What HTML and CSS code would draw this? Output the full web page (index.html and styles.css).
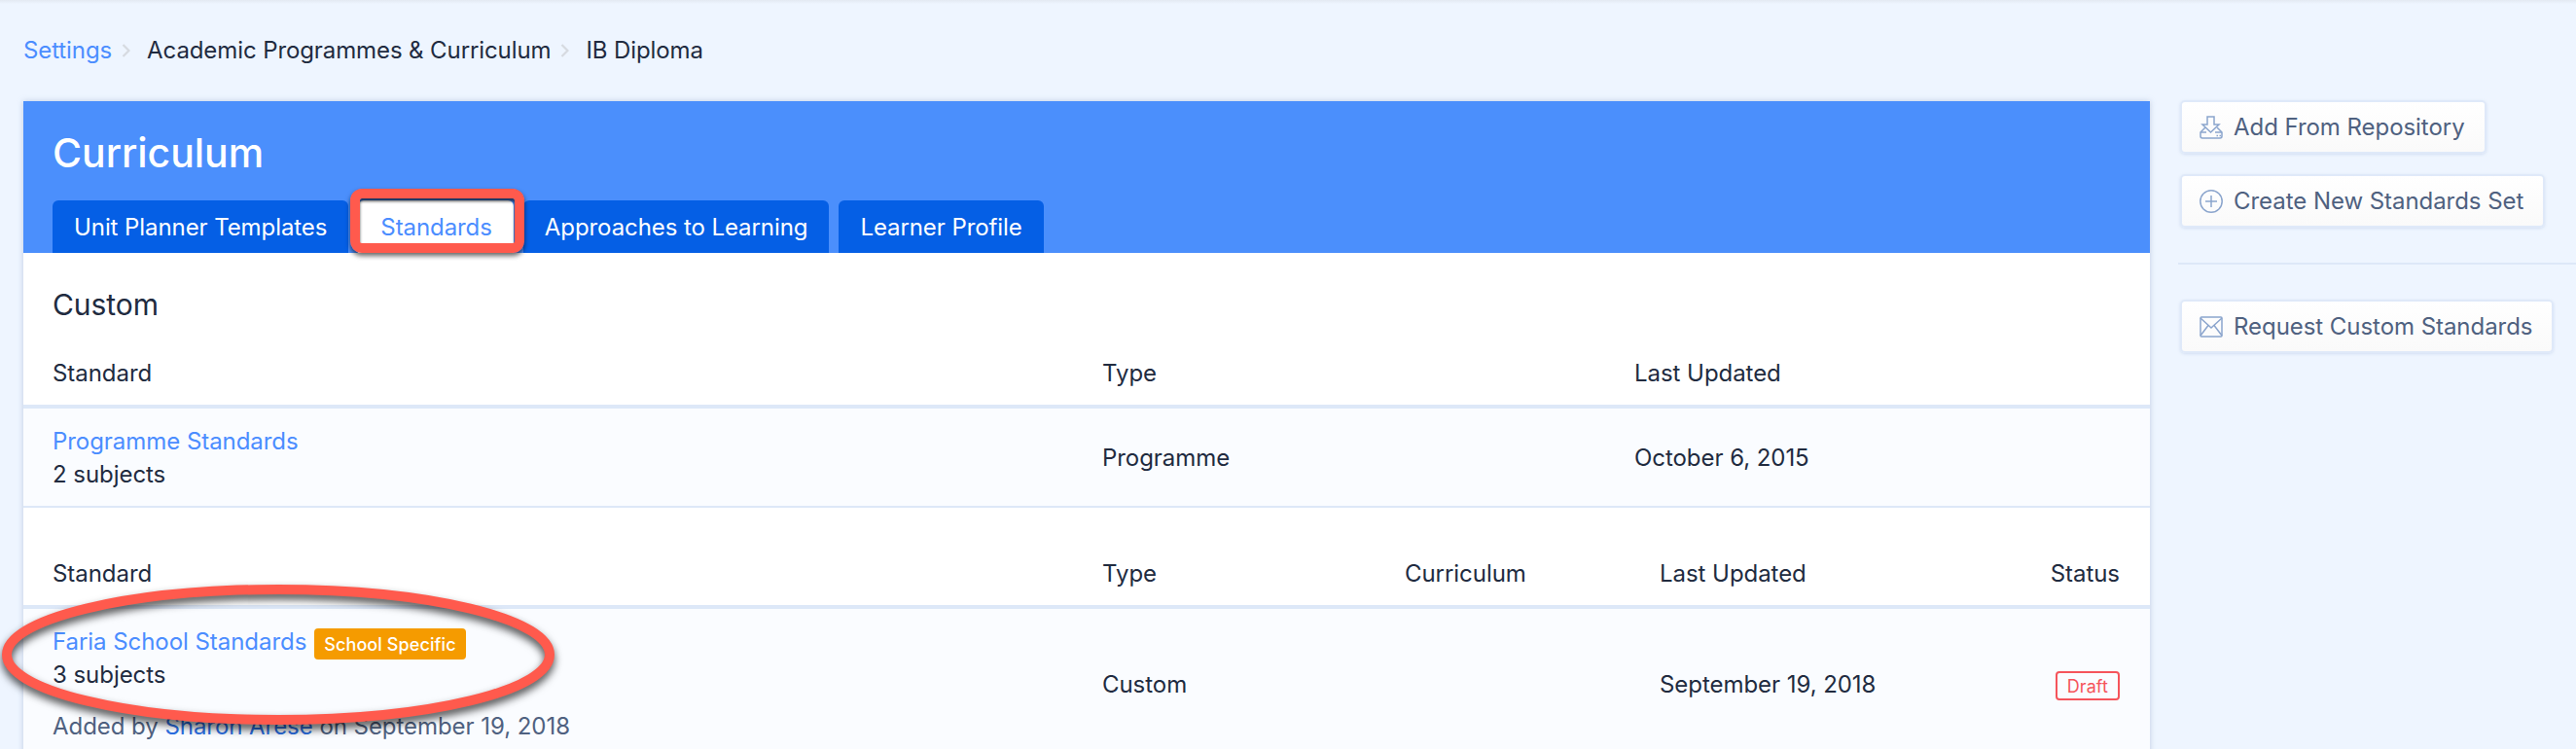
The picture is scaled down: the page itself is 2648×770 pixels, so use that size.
FILE: index.html
```html
<!DOCTYPE html>
<html lang="en">
<head>
<meta charset="utf-8">
<title>Curriculum</title>
<link rel="stylesheet" href="styles.css">
</head>
<body>
<div class="topbar"></div>
<nav class="crumbs">
  <a class="link" href="#">Settings</a>
  <svg class="chev" viewBox="0 0 9 14"><polyline points="1.500,1 7.500,7 1.500,13"/></svg>
  <span>Academic Programmes &amp; Curriculum</span>
  <svg class="chev" viewBox="0 0 9 14"><polyline points="1.500,1 7.500,7 1.500,13"/></svg>
  <span>IB Diploma</span>
</nav>
<div class="layout">
  <main class="panel">
    <header class="panel-head">
      <h1 class="title">Curriculum</h1>
      <div class="tabs">
        <a class="tab" href="#">Unit Planner Templates</a>
        <a class="tab tab-active" href="#">Standards<span class="mark-box"></span></a>
        <a class="tab" href="#">Approaches to Learning</a>
        <a class="tab" href="#">Learner Profile</a>
      </div>
    </header>
    <section>
      <h2 class="section-title">Custom</h2>
      <div class="grid-a row-head">
        <div>Standard</div><div>Type</div><div>Last Updated</div>
      </div>
      <div class="grid-a row-body">
        <div>
          <div class="line"><a class="link" href="#">Programme Standards</a></div>
          <div class="line">2 subjects</div>
        </div>
        <div>Programme</div>
        <div>October 6, 2015</div>
      </div>
    </section>
    <section class="second">
      <div class="grid-b row-head">
        <div>Standard</div><div>Type</div><div>Curriculum</div><div>Last Updated</div><div class="end">Status</div>
      </div>
      <div class="grid-b row-body row-tall">
        <div>
          <div class="line"><a class="link" href="#">Faria School Standards</a><span class="badge">School Specific</span></div>
          <div class="line">3 subjects</div>
          <div class="line meta">Added by <a class="person" href="#">Sharon Arese</a> on September 19, 2018</div>
          <svg class="mark-ring" viewBox="0 0 580 150"><ellipse cx="284" cy="72" rx="279" ry="67"/></svg>
        </div>
        <div>Custom</div>
        <div></div>
        <div>September 19, 2018</div>
        <div class="end"><span class="draft">Draft</span></div>
      </div>
    </section>
  </main>
  <aside class="side">
    <a class="btn" href="#">
      <svg class="ico" viewBox="0 0 24 24"><path d="M8 1h7v8h5l-8.500 8L3 9h5z"/><path d="M6 12l-5 5v4a2 2 0 0 0 2 2h18a2 2 0 0 0 2-2v-4l-5-5"/><path d="M1 17h6M16 17h7"/><path d="M17.500 20.500h1.500M20.500 20.500h1.500"/></svg>
      Add From Repository
    </a>
    <a class="btn" href="#">
      <svg class="ico" viewBox="0 0 24 24"><circle cx="12" cy="12" r="11.200"/><path d="M12 6v12M6 12h12"/></svg>
      Create New Standards Set
    </a>
    <hr class="rule">
    <a class="btn" href="#">
      <svg class="ico" viewBox="0 0 24 24"><rect x="1" y="2" width="22" height="20" rx="1"/><path d="M1 3l11 10L23 3M1 21l8-10.500M23 21l-8-10.500"/></svg>
      Request Custom Standards
    </a>
  </aside>
</div>
</body>
</html>
```
FILE: styles.css
```css
* { box-sizing: border-box; }
html, body { height: 770px; overflow: hidden; }
body {
  margin: 0;
  background: #eef5ff;
  color: #212b3f;
  font-family: Inter, "Noto Sans", sans-serif;
  font-size: 24px;
  line-height: 34px;
  letter-spacing: -.05px;
}
a { text-decoration: none; }
.link { color: #4b8dff; }
.topbar { height: 4px; background: linear-gradient(#e3e9f2, #eef5ff); }
.crumbs {
  display: flex;
  align-items: center;
  height: 34px;
  margin: 31px 0 0 24px;
  letter-spacing: -.1px;
}
.chev { width: 9px; height: 14px; margin: 0 17px 0 10px; fill: none; stroke: #d6dae0; stroke-width: 2.200; }
.layout {
  display: flex;
  align-items: flex-start;
  margin-top: 35px;
  padding-left: 24px;
}
.panel {
  width: 2186px;
  background: #fff;
  box-shadow: 0 0 6px rgba(120, 145, 185, .4);
}
.panel-head {
  height: 156px;
  padding: 28px 0 0 30px;
  background: #4b8ffc;
  display: flex;
  flex-direction: column;
}
.title {
  margin: 0;
  height: 50px;
  color: #fff;
  font-size: 41px;
  line-height: 50px;
  font-weight: 500;
}
.tabs { display: flex; gap: 10px; margin-top: 24px; letter-spacing: -.08px; }
.tab {
  height: 54px;
  padding: 0 22px;
  border-radius: 6px 6px 0 0;
  background: #055fe5;
  color: #fff;
  line-height: 56px;
  font-weight: 400;
}
.tab-active { position: relative; padding-left: 23px; background: #fff; color: #4b8dff; }
.mark-box {
  position: absolute;
  left: -8px;
  right: -11px;
  top: -12px;
  bottom: 0;
  border: 10px solid #ff5a4d;
  border-radius: 12px;
  box-shadow: 0 3px 5px rgba(0, 0, 0, .6), inset 0 3px 3px rgba(0, 0, 0, .65);
}
.section-title {
  margin: 0;
  padding: 35px 0 19px 30px;
  font-size: 30px;
  line-height: 36px;
  font-weight: 400;
}
.grid-a, .grid-b {
  display: grid;
  align-items: center;
  padding: 0 31px 0 30px;
}
.grid-a { grid-template-columns: 1079px 547px 1fr; }
.grid-b { grid-template-columns: 1079px 311px 262px 1fr 120px; }
.row-head { height: 70px; padding-top: 2px; border-bottom: 4px solid #dde8f8; }
.row-body {
  min-height: 102px;
  padding-top: 17px;
  padding-bottom: 15px;
  background: #fafcff;
  border-bottom: 2px solid #dde8f8;
}
.row-tall { position: relative; padding-bottom: 18px; }
.second { margin-top: 34px; }
.end { text-align: right; }
.line { display: flex; align-items: center; height: 34px; }
.meta { margin-top: 19px; color: #4f6180; white-space: pre; }
.person { color: #2a6de0; }
.badge {
  margin: 3px 0 0 8px;
  padding: 0 10px;
  height: 32px;
  border-radius: 4px;
  background: #f59b00;
  color: #fff;
  font-size: 18px;
  line-height: 33px;
  font-weight: 500;
  letter-spacing: .1px;
}
.draft {
  display: inline-block;
  height: 30px;
  padding: 0 10px;
  border: 2px solid #f5545b;
  border-radius: 4px;
  color: #f5545b;
  font-size: 18px;
  line-height: 27px;
  letter-spacing: .1px;
}
.mark-ring {
  position: absolute;
  left: -22px;
  top: -25px;
  width: 580px;
  height: 150px;
  overflow: visible;
  filter: drop-shadow(0 5px 4px rgba(0, 0, 0, .7));
}
.mark-ring ellipse { fill: none; stroke: #ff5a4d; stroke-width: 10; }
.side {
  margin-left: 31px;
  flex: 1;
  display: flex;
  flex-direction: column;
  align-items: flex-start;
  margin-top: -1px;
}
.btn {
  display: flex;
  align-items: center;
  gap: 11px;
  height: 55px;
  padding: 1px 20px 0 18px;
  border: 2px solid #dfe9f9;
  border-radius: 5px;
  background: linear-gradient(#fff, #fafafa);
  color: #4f6180;
  font-size: 24px;
  box-shadow: 0 1px 3px rgba(130, 160, 205, .25);
}
.btn + .btn { margin-top: 21px; }
.ico { width: 24px; height: 24px; fill: none; stroke: #8ba5cd; stroke-width: 1.500; flex: none; }
.rule { align-self: stretch; margin: 36px 0 36px -2px; border: 0; border-top: 2px solid #dde8f8; }
```
